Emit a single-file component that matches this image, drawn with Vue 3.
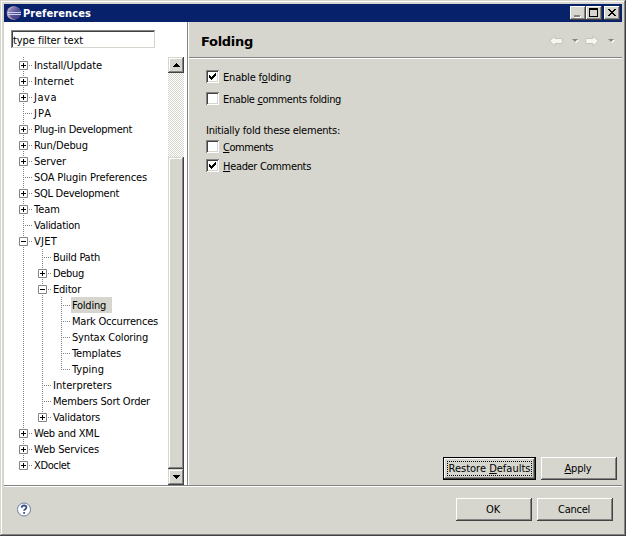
<script setup>
const tree = [
  ['Install/Update', 0, '+', 68], ['Internet', 0, '+', 40], ['Java', 0, '+', 23], ['JPA', 0, '', 18],
  ['Plug-in Development', 0, '+', 98], ['Run/Debug', 0, '+', 54], ['Server', 0, '+', 32],
  ['SOA Plugin Preferences', 0, '', 113], ['SQL Development', 0, '+', 85], ['Team', 0, '+', 26],
  ['Validation', 0, '', 46], ['VJET', 0, '-', 23], ['Build Path', 1, '', 47], ['Debug', 1, '+', 31],
  ['Editor', 1, '-', 28], ['Folding', 2, '', 34], ['Mark Occurrences', 2, '', 86],
  ['Syntax Coloring', 2, '', 76], ['Templates', 2, '', 49], ['Typing', 2, '', 32],
  ['Interpreters', 1, '', 59], ['Members Sort Order', 1, '', 97], ['Validators', 1, '+', 47],
  ['Web and XML', 0, '+', 65], ['Web Services', 0, '+', 65], ['XDoclet', 0, '+', 36],
].map(([label, level, toggle, width]) => ({ label, level, toggle, width }))

function continues(i, level) {
  for (let j = i + 1; j < tree.length; j++) {
    if (tree[j].level < level) return false
    if (tree[j].level === level) return true
  }
  return false
}
const rows = tree.map((row, i) => ({
  ...row,
  selected: row.label === 'Folding',
  guides: Array.from({ length: row.level }, (_, l) => continues(i, l)),
  more: continues(i, row.level),
}))

// Spreads the letters so that a label takes its given width.
const vFit = {
  mounted(el, { value }) {
    const n = el.textContent.length
    el.style.letterSpacing = (value - el.getBoundingClientRect().width) / n + 'px'
  },
}
</script>

<template>
  <div class="window">
    <header class="titlebar">
      <svg class="logo" width="16" height="16" viewBox="0 0 16 16">
        <defs>
          <linearGradient id="orb" x1="0" y1="0" x2="1" y2="1">
            <stop offset="0" stop-color="#a49cc8" /><stop offset=".5" stop-color="#5a5298" /><stop offset="1" stop-color="#3c3478" />
          </linearGradient>
        </defs>
        <circle cx="7.5" cy="8" r="6.8" fill="#b8a0b8" />
        <circle cx="9" cy="8" r="6.2" fill="url(#orb)" />
        <path d="M2 7.5h13M2 9.5h13" stroke="#c8d4f0" />
      </svg>
      <span v-fit="68" class="caption">Preferences</span>
      <div class="controls">
        <button class="ctl"><svg width="16" height="14"><path d="M5 10h6v2H5z" fill="#fff" /><path d="M4 9h6v2H4z" fill="#848484" /></svg></button>
        <button class="ctl"><svg width="16" height="14"><path d="M3 2h9v9H3zM4 4v6h7V4z" fill="#000" fill-rule="evenodd" /></svg></button>
        <button class="ctl close"><svg width="16" height="14"><path d="M4 3h2v1h1v1h2V4h1V3h2v1h-1v1h-1v1H9v1h1v1h1v1h1v1h-2V9H9V8H7v1H6v1H4V9h1V8h1V7h1V6H6V5H5V4H4z" fill="#000" /></svg></button>
      </div>
    </header>
    <main class="body">
      <aside class="side">
        <div class="filter"><span v-fit="70">type filter text</span></div>
        <div class="treewrap">
          <div class="tree">
            <div v-for="row in rows" :key="row.label" class="row">
              <i v-for="(g, l) in row.guides" :key="l" class="guide" :class="{ on: g }"></i>
              <i class="node" :class="{ more: row.more }">
                <svg v-if="row.toggle" class="box" width="9" height="9"><path d="M.5 .5h8v8h-8z" fill="#fff" stroke="#848484" /><path d="M2 4h5v1H2z" /><path v-if="row.toggle === '+'" d="M4 2h1v5H4z" /></svg>
              </i>
              <span class="label" :class="{ selected: row.selected }"><span v-fit="row.width">{{ row.label }}</span></span>
            </div>
          </div>
          <div class="scrollbar">
            <div class="arrow"><svg width="7" height="4"><path d="M3 0h1v1h1v1h1v1h1v1H0V3h1V2h1V1h1z" /></svg></div>
            <div class="track"></div>
            <div class="thumb"></div>
            <div class="arrow"><svg width="7" height="4"><path d="M0 0h7v1H6v1H5v1H4v1H3V3H2V2H1V1H0z" /></svg></div>
          </div>
        </div>
      </aside>
      <section class="page">
        <div class="pagehead">
          <h1><span v-fit="52">Folding</span></h1>
          <div class="history">
            <svg width="14" height="12" viewBox="0 0 14 12"><path d="M.7 6 6 .8V3.5h7.3v5H6v2.7z" fill="#f7f5f0" stroke="#c6c0b8" /></svg>
            <svg class="drop" width="7" height="4"><path d="M1 1h6L4 4z" fill="#fff" /><path d="M0 0h6L3 3z" fill="#848484" /></svg>
            <svg width="14" height="12" viewBox="0 0 14 12"><path d="M13.3 6 8 .8V3.5H.7v5H8v2.7z" fill="#f7f5f0" stroke="#c6c0b8" /></svg>
            <svg class="drop" width="7" height="4"><path d="M1 1h6L4 4z" fill="#fff" /><path d="M0 0h6L3 3z" fill="#848484" /></svg>
          </div>
        </div>
        <div class="options">
          <label class="check"><i class="tick"><svg width="7" height="7"><path d="M0 2h1v1h1v1h1V3h1V2h1V1h1V0h1v3H6v1H5v1H4v1H3v1H2V6H1V5H0z" /></svg></i><span v-fit="68">Enable f<u>o</u>lding</span></label>
          <label class="check second"><i class="tick"></i><span v-fit="118">Enable <u>c</u>omments folding</span></label>
          <p class="intro"><span v-fit="134">Initially fold these elements:</span></p>
          <label class="check third"><i class="tick"></i><span v-fit="50"><u>C</u>omments</span></label>
          <label class="check fourth"><i class="tick"><svg width="7" height="7"><path d="M0 2h1v1h1v1h1V3h1V2h1V1h1V0h1v3H6v1H5v1H4v1H3v1H2V6H1V5H0z" /></svg></i><span v-fit="88"><u>H</u>eader Comments</span></label>
        </div>
        <div class="actions">
          <button class="btn focus"><span class="ring"><span v-fit="82">Restore <u>D</u>efaults</span></span></button>
          <button class="btn nudge"><span v-fit="27"><u>A</u>pply</span></button>
        </div>
      </section>
    </main>
    <footer class="footer">
      <svg class="help" width="15" height="15" viewBox="0 0 15 15"><circle cx="7" cy="7.5" r="6.5" fill="#fff" stroke="#6b7ca5" /><path d="M4.7 5.8c0-3.2 4.7-2.9 4.7-.3 0 1.7-2.3 1.7-2.3 3.3M7.1 10v1.8" fill="none" stroke="#3a5284" stroke-width="1.8" /></svg>
      <button class="btn nudge"><span v-fit="14">OK</span></button>
      <button class="btn nudge"><span v-fit="32">Cancel</span></button>
    </footer>
  </div>
</template>

<style>
body { background: #d6d6ce; }
</style>

<style scoped>
* { box-sizing: border-box; }
svg { display: block; flex: none; }
.window {
  width: 626px; height: 536px; padding: 4px; display: flex; flex-direction: column;
  background: #d6d6ce; color: #000; font: 11px/16px "DejaVu Sans Condensed", "DejaVu Sans", sans-serif; font-stretch: condensed;
  white-space: nowrap; overflow: hidden;
  box-shadow: inset -1px -1px #424242, inset 1px 1px #d6d6ce, inset -2px -2px #848484, inset 2px 2px #fff;
}
button { font: inherit; color: inherit; padding: 0; border: 0; background: #d6d6ce; }
.titlebar { height: 18px; flex: none; background: #08216b; display: flex; align-items: center; padding: 0 2px; color: #fff; }
.caption { font-weight: bold; margin: 2px 0 0 1px; }
.controls { margin-left: auto; display: flex; }
.ctl { width: 16px; height: 14px; box-shadow: inset -1px -1px #424242, inset 1px 1px #fff, inset -2px -2px #848484; }
.close { margin-left: 2px; }
.body { height: 463px; flex: none; display: flex; }
.side { width: 183px; flex: none; background: #fff; padding: 8px 0 0 7px; }
.filter {
  width: 144px; height: 18px; padding: 4px 2px 2px; line-height: 15px; display: flex;
  box-shadow: inset 1px 1px #848484, inset -1px -1px #d6d6ce, inset 2px 2px #424242;
}
.filter span { margin-top: -1px; }
.treewrap { display: flex; justify-content: space-between; margin-top: 9px; height: 428px; padding-right: 3px; }
.tree { padding-left: 3px; }
.row { display: flex; height: 16px; }
.guide, .node { position: relative; width: 19px; height: 16px; flex: none; }
.guide.on::before, .node::before {
  content: ""; position: absolute; left: 9px; top: 0; width: 1px; height: 16px;
  background: repeating-linear-gradient(#848484 0 1px, transparent 1px 2px);
}
.node::before { height: 9px; }
.node.more::before { height: 16px; }
.node::after {
  content: ""; position: absolute; left: 9px; top: 8px; width: 9px; height: 1px;
  background: repeating-linear-gradient(90deg, #848484 0 1px, transparent 1px 2px);
}
.box { position: absolute; left: 5px; top: 4px; z-index: 1; }
.label { height: 16px; line-height: 18px; padding: 0 6px 0 1px; }
.selected { background: #d6d6ce; }
.scrollbar { width: 16px; display: flex; flex-direction: column; }
.arrow, .thumb { background: #d6d6ce; box-shadow: inset -1px -1px #424242, inset 1px 1px #d6d6ce, inset -2px -2px #848484, inset 2px 2px #fff; }
.arrow { height: 16px; flex: none; display: grid; place-items: center; }
.track { height: 84px; background: repeating-conic-gradient(#d6d6ce 0 25%, #fff 0 50%) 0 0 / 2px 2px; }
.thumb { flex: 1; }
.page { flex: 1; border-left: 1px solid #848484; box-shadow: inset 1px 0 #fff; display: flex; flex-direction: column; }
.pagehead { height: 37px; margin-left: 1px; flex: none; display: flex; align-items: center; padding: 0 7px 0 12px; border-bottom: 1px solid #fff; box-shadow: inset 0 -1px #848484; }
h1 { margin: 4px 0 0; font: bold 13px/18px "DejaVu Sans", sans-serif; font-stretch: normal; }
.history { margin: 2px 0 0 auto; display: flex; align-items: center; gap: 9px; }
.drop + svg { margin-left: -3px; }
.options { padding: 11px 0 0 18px; flex: 1; }
.check { display: flex; align-items: center; height: 13px; gap: 4px; }
.check span { margin-top: 2px; }
.tick {
  width: 13px; height: 13px; background: #fff; flex: none; display: grid; place-items: center;
  box-shadow: inset 1px 1px #848484, inset -1px -1px #fff, inset 2px 2px #424242, inset -2px -2px #d6d6ce;
}
.second { margin-top: 9px; }
.intro { margin: 18px 0 1px; }
.fourth { margin-top: 6px; }
.actions { display: flex; justify-content: flex-end; gap: 5px; padding: 0 5px 5px 0; }
.btn { width: 76px; height: 23px; display: grid; place-items: center; box-shadow: inset -1px -1px #424242, inset 1px 1px #fff, inset -2px -2px #848484; }
.nudge { padding-right: 2px; }
.focus { width: 93px; border: 1px solid #000; }
.ring { width: 85px; height: 15px; line-height: 13px; border: 1px dotted #000; text-align: center; }
.footer { flex: 1; border-top: 1px solid #848484; box-shadow: inset 0 1px #fff; display: flex; padding: 12px 9px 0 13px; gap: 5px; }
.help { margin: 4px auto 0 0; }
</style>
